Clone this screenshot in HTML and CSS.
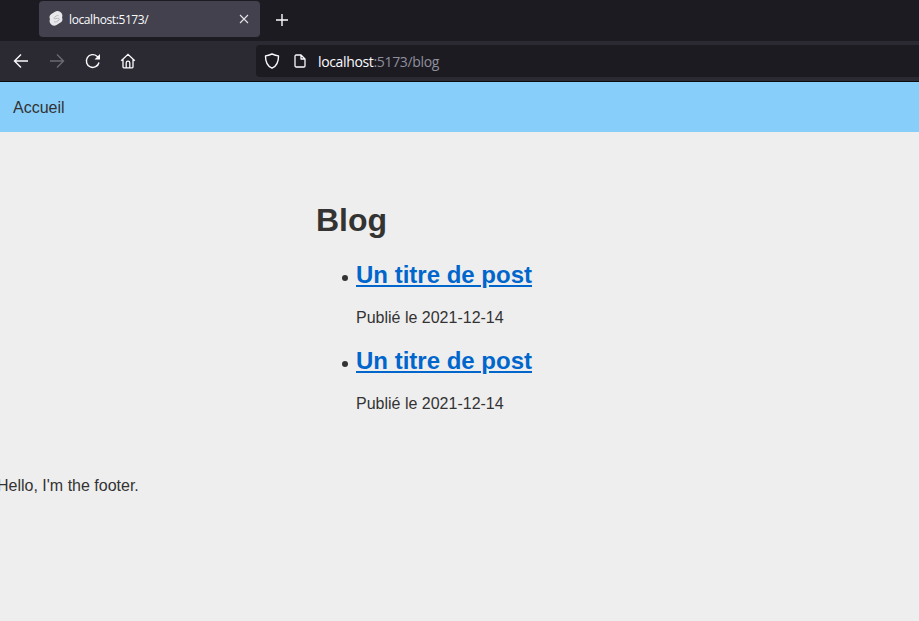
FILE: index.html
```html
<!DOCTYPE html>
<html lang="fr">
<head>
<meta charset="utf-8">
<title>Blog</title>
<link rel="stylesheet" href="styles.css">
</head>
<body>
<div class="tabbar">
  <div class="tab">
    <svg class="favicon" width="16" height="16" viewBox="0 0 16 16"><path d="M13 1.600C11.400-.3 8.800-.4 7 .7L3.300 3C1.600 4.100 1 6.300 2 8.200 1.300 9.500 1.400 11.400 2.600 12.800c1.300 1.900 4 2.500 5.900 1.200l4-2.400c1.800-1.200 2.500-3.300 1.500-5.200.8-1.500.4-3.400-1-4.800z" fill="#e8e8ea"/><path d="M6 10.600c1 .8 2.300.4 3-.2L11 9c1-1-.3-2-1.500-1.700L7 7.900c-1.100 0-1.200-1.300-.2-1.900l2-1.300c.7-.4 1.500-.3 2 .3" fill="none" stroke="#b4b4bc" stroke-width="1"/></svg>
    <span class="tab-title">localhost:5173/</span>
    <svg class="tab-close" width="10" height="10" viewBox="0 0 10 10"><path d="M1 1l8 8M9 1l-8 8" stroke="#e4e4e8" stroke-width="1.100" fill="none"/></svg>
  </div>
  <svg class="new-tab" width="12" height="12" viewBox="0 0 12 12"><path d="M6 0v12M0 6h12" stroke="#fbfbfe" stroke-width="1.400" fill="none"/></svg>
</div>
<div class="toolbar">
  <div class="nav-buttons">
    <svg width="16" height="16" viewBox="0 0 16 16"><path d="M15 8H2M8 1.500L1.500 8 8 14.500" stroke="#fbfbfe" stroke-width="1.400" fill="none"/></svg>
    <svg width="16" height="16" viewBox="0 0 16 16"><path d="M1 8h13M8 1.500L14.500 8 8 14.500" stroke="#6b6a72" stroke-width="1.400" fill="none"/></svg>
    <svg width="16" height="16" viewBox="0 0 16 16"><path d="M14 9.500A6.400 6.400 0 1 1 12 3.200L14.300 5" stroke="#fbfbfe" stroke-width="1.400" fill="none"/><path d="M15 1v5.500H9.500z" fill="#fbfbfe"/></svg>
    <svg class="home-icon" width="16" height="16" viewBox="0 0 16 16"><path d="M1.200 7.800L8 1.300l6.800 6.500M3 6.500V14a.8.8 0 0 0 .8.8h8.400A.8.8 0 0 0 13 14V6.500M6.200 14.500V10a1.800 1.800 0 0 1 3.600 0v4.500" stroke="#fbfbfe" stroke-width="1.300" fill="none"/></svg>
  </div>
  <div class="urlbar">
    <svg width="16" height="16" viewBox="0 0 16 16"><path d="M8 1C5.800 1.900 3.800 2.600 1.500 2.900 1.400 8.600 3.300 13 8 15.200 12.700 13 14.600 8.600 14.500 2.900 12.200 2.600 10.200 1.900 8 1z" stroke="#fbfbfe" stroke-width="1.400" fill="none" stroke-linejoin="round"/></svg>
    <svg class="page-icon" width="12" height="14" viewBox="0 0 12 14"><path d="M1 2.200C1 1.500 1.500 1 2.200 1h4.800L11 5v6.800c0 .7-.5 1.200-1.200 1.200H2.200C1.500 13 1 12.500 1 11.800zM7 1v4h4" stroke="#fbfbfe" stroke-width="1.300" fill="none" stroke-linejoin="round"/></svg>
    <span class="url"><span class="url-host">localhost</span>:5173/blog</span>
  </div>
</div>
<nav class="site-nav"><a class="site-link" href="#">Accueil</a></nav>
<main class="content">
  <h1 class="title">Blog</h1>
  <ul class="posts">
    <li class="post">
      <h2 class="post-title"><a href="#">Un titre de post</a></h2>
      <p class="post-date">Publié le 2021-12-14</p>
    </li>
    <li class="post">
      <h2 class="post-title"><a href="#">Un titre de post</a></h2>
      <p class="post-date">Publié le 2021-12-14</p>
    </li>
  </ul>
</main>
<footer class="footer">Hello, I'm the footer.</footer>
</body>
</html>
```

FILE: styles.css
```css
html, body {
  margin: 0;
  padding: 0;
  height: 100%;
  overflow: hidden;
}
body {
  background: #eeeeee;
  color: #333333;
  font-family: "Liberation Sans", Arial, sans-serif;
  font-size: 16px;
}
.tabbar {
  height: 41px;
  box-sizing: border-box;
  background: #1c1b22;
  display: flex;
  align-items: flex-start;
  padding: 1px 0 0 39px;
}
.tab {
  width: 221px;
  height: 36px;
  box-sizing: border-box;
  background: #42414d;
  border-radius: 4px;
  display: flex;
  align-items: center;
  padding: 0 11px 0 9px;
}
.favicon {
  flex: none;
}
.tab-title {
  flex: 1;
  margin-left: 5px;
  color: #fbfbfe;
  font-family: "Open Sans", "Noto Sans", sans-serif;
  font-size: 12px;
  letter-spacing: -0.4px;
}
.new-tab {
  margin: 13px 0 0 16px;
}
.toolbar {
  height: 41px;
  box-sizing: border-box;
  background: #2b2a33;
  border-bottom: 1px solid #0c0c0d;
  display: flex;
  align-items: flex-start;
}
.nav-buttons {
  display: flex;
  gap: 20px;
  padding: 12px 0 0 13px;
  width: 256px;
  box-sizing: border-box;
}
.home-icon {
  margin-left: -1px;
}
.urlbar {
  flex: 1;
  height: 32px;
  margin-top: 4px;
  background: #1c1b22;
  border-radius: 4px 0 0 4px;
  display: flex;
  align-items: center;
  padding-left: 8px;
}
.page-icon {
  margin-left: 14px;
}
.url {
  margin-left: 12px;
  color: #8f8f9d;
  font-family: "Open Sans", "Noto Sans", sans-serif;
  font-size: 14px;
  letter-spacing: -0.35px;
}
.url-host {
  color: #fbfbfe;
}
.site-nav {
  height: 50px;
  background: #87cefa;
  display: flex;
  align-items: center;
  padding: 2px 0 0 13px;
  box-sizing: border-box;
}
.site-link {
  color: #333333;
  text-decoration: none;
}
.content {
  padding: 70px 0 0 316px;
}
.title {
  margin: 0;
  font-size: 32px;
  line-height: 37px;
}
.posts {
  margin: 22px 0 0;
  padding-left: 40px;
  list-style: none;
}
.post {
  position: relative;
}
.post::before {
  content: "";
  position: absolute;
  left: -14px;
  top: 14px;
  width: 6px;
  height: 6px;
  border-radius: 50%;
  background: #333333;
}
.post-title {
  margin: 0;
  font-size: 24px;
  line-height: 28px;
}
.post-title a {
  color: #0066cc;
}
.post-date {
  margin: 20px 0;
  line-height: 18px;
}
.footer {
  margin: 64px 0 0 -3px;
  line-height: 18px;
}
```
